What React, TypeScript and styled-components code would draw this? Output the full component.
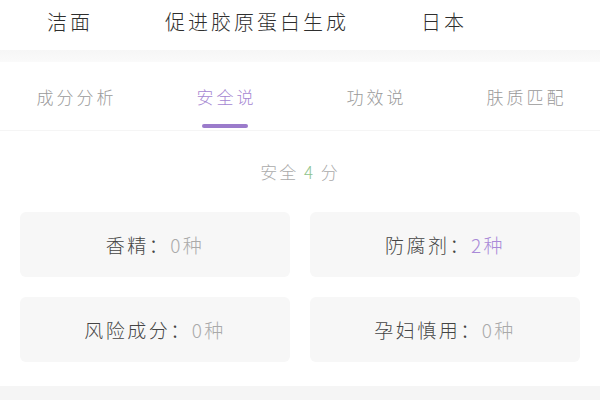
import React, { FC } from 'react';
import styled, { createGlobalStyle } from 'styled-components';

const GlobalStyle = createGlobalStyle`
    html, body {
        margin: 0;
        padding: 0;
        background: #ffffff;
    }
    body {
        font-family: "Noto Sans CJK SC", "Noto Sans", sans-serif;
        font-weight: 300;
        width: 600px;
        height: 400px;
        overflow: hidden;
    }
`;

type Tab = { label: string; active?: boolean };
type Stat = { label: string; value: string; highlight?: boolean };

const tabs: Tab[] = [
    { label: '成分分析' },
    { label: '安全说', active: true },
    { label: '功效说' },
    { label: '肤质匹配' },
];

const stats: Stat[] = [
    { label: '香精：', value: '0种' },
    { label: '防腐剂：', value: '2种', highlight: true },
    { label: '风险成分：', value: '0种' },
    { label: '孕妇慎用：', value: '0种' },
];

const App: FC = () => {
    return (
        <Page>
            <GlobalStyle />
            <Header>
                <HeaderItem>洁面</HeaderItem>
                <HeaderItem>促进胶原蛋白生成</HeaderItem>
                <HeaderItem>日本</HeaderItem>
            </Header>
            <Band />
            <TabBar>
                {tabs.map((t) => (
                    <TabItem key={t.label} $active={t.active}>
                        <TabLabel>{t.label}</TabLabel>
                        <Indicator $visible={t.active} />
                    </TabItem>
                ))}
            </TabBar>
            <Content>
                <Score>
                    安全 <ScoreValue>4</ScoreValue> 分
                </Score>
                <Grid>
                    {stats.map((s) => (
                        <Card key={s.label}>
                            <CardLabel>{s.label}</CardLabel>
                            <CardValue $highlight={s.highlight}>{s.value}</CardValue>
                        </Card>
                    ))}
                </Grid>
            </Content>
            <Footer />
        </Page>
    );
};

export default App;

const Page = styled.div`
    width: 600px;
    height: 400px;
    display: flex;
    flex-direction: column;
    background: #fff;
`;

const Header = styled.div`
    height: 50px;
    padding: 0 0 6px 47px;
    box-sizing: border-box;
    display: flex;
    align-items: center;
    gap: 72px;
`;

const HeaderItem = styled.span`
    font-size: 20px;
    letter-spacing: 3px;
    color: #2e2e2e;
    line-height: 24px;
`;

const Band = styled.div`
    height: 12px;
    background: linear-gradient(#f6f6f6, #fafafa);
`;

const TabBar = styled.div`
    height: 68px;
    display: flex;
    border-bottom: 1px solid #f5f5f5;
`;

const TabItem = styled.div<{ $active?: boolean }>`
    width: 150px;
    padding-top: 23px;
    display: flex;
    flex-direction: column;
    align-items: center;
    color: ${(p) => (p.$active ? '#a687d2' : '#9a9a9a')};
`;

const TabLabel = styled.span`
    font-size: 17px;
    letter-spacing: 3px;
    margin-right: -3px;
    line-height: 24px;
`;

const Indicator = styled.div<{ $visible?: boolean }>`
    margin-top: 15px;
    width: 46px;
    height: 4px;
    border-radius: 2px;
    background: ${(p) => (p.$visible ? '#9b7bcb' : 'transparent')};
`;

const Content = styled.div`
    padding: 29px 20px 24px;
    display: flex;
    flex-direction: column;
    align-items: stretch;
`;

const Score = styled.div`
    text-align: center;
    font-size: 17px;
    letter-spacing: 2px;
    line-height: 24px;
    color: #aaaaaa;
`;

const ScoreValue = styled.span`
    color: #8fc48c;
`;

const Grid = styled.div`
    margin-top: 28px;
    display: grid;
    grid-template-columns: 1fr 1fr;
    gap: 20px;
`;

const Card = styled.div`
    height: 65px;
    border-radius: 6px;
    background: #f7f7f7;
    display: flex;
    align-items: center;
    justify-content: center;
    font-size: 19px;
    letter-spacing: 2.5px;
`;

const CardLabel = styled.span`
    color: #444;
`;

const CardValue = styled.span<{ $highlight?: boolean }>`
    color: ${(p) => (p.$highlight ? '#a98ad8' : '#aaaaaa')};
`;

const Footer = styled.div`
    flex: 1;
    background: #f5f5f5;
`;
